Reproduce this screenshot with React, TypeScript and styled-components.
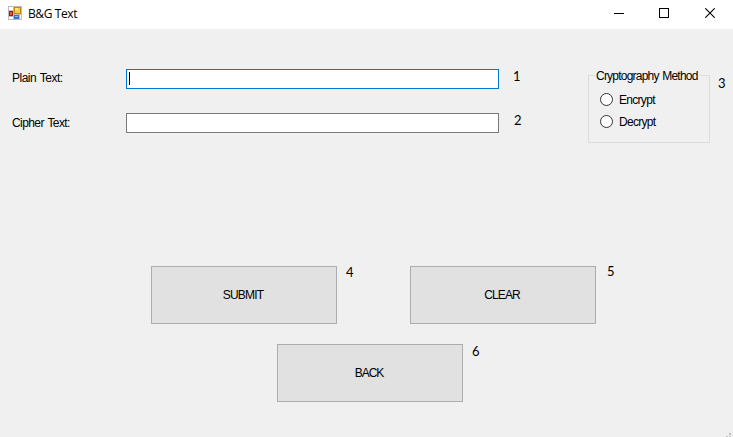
import React from "react";
import styled, { createGlobalStyle } from "styled-components";

const GlobalStyle = createGlobalStyle`
  * { box-sizing: border-box; }
  html, body { margin: 0; padding: 0; overflow: hidden; }
`;

const Window = styled.div`
  position: relative;
  display: flex;
  flex-direction: column;
  width: 733px;
  height: 437px;
  background: #f0f0f0;
  color: #000;
  font: 12px/16px "Liberation Sans", Arial, sans-serif;
`;

const TitleBar = styled.header`
  display: flex;
  align-items: center;
  height: 29px;
  padding-left: 8px;
  background: #fff;
  flex: none;
`;

const AppIcon = styled.svg`
  display: block;
  width: 14px;
  height: 14px;
  margin-top: -3px;
`;

const Title = styled.h1`
  flex: 1;
  margin: -1px 0 0 6px;
  font: 12px/16px "Open Sans", "Noto Sans", sans-serif;
  letter-spacing: -0.4px;
`;

const WindowButton = styled.button`
  display: flex;
  align-items: center;
  justify-content: center;
  width: 46px;
  height: 29px;
  padding: 0 0 3px;
  border: 0;
  background: transparent;
  &:first-of-type { width: 45px; }
`;

const Form = styled.main`
  display: flex;
  flex-direction: column;
  flex: 1;
`;

const TopSection = styled.section`
  display: flex;
  height: 237px;
  padding-top: 40px;
`;

const Fields = styled.div`
  display: flex;
  flex-direction: column;
  gap: 24px;
  width: 588px;
`;

const FieldRow = styled.div`
  display: flex;
  height: 20px;
`;

const FieldLabel = styled.label<{ $top: number; $tracking: number }>`
  width: 126px;
  padding: ${(p) => p.$top}px 0 0 12px;
  letter-spacing: ${(p) => p.$tracking}px;
  word-spacing: 1px;
`;

const Field = styled.div<{ $focused?: boolean }>`
  width: 373px;
  height: 20px;
  padding: 2px;
  border: 1px solid ${(p) => (p.$focused ? "#0078d7" : "#7a7a7a")};
  background: #fff;
`;

const Caret = styled.span`
  display: block;
  width: 1px;
  height: 13px;
  background: #000;
`;

const Marker = styled.span<{ $left: number; $top: number }>`
  margin: ${(p) => p.$top}px 0 0 ${(p) => p.$left}px;
  font: 13px/16px Lato, "Open Sans", sans-serif;
`;

const Group = styled.fieldset`
  width: 122px;
  height: 77px;
  min-width: 0;
  margin: -3px 0 0;
  padding: 5px 0 0 11px;
  border: 1px solid #dcdcdc;
`;

const Legend = styled.legend`
  margin-left: -5px;
  padding: 2px 1px 0;
  white-space: nowrap;
  width: 105px;
  letter-spacing: -0.78px;
  word-spacing: 1px;
`;

const Option = styled.label`
  display: flex;
  align-items: center;
  gap: 6px;
  height: 22px;
  letter-spacing: -0.7px;
`;

const Radio = styled.span`
  width: 13px;
  height: 13px;
  margin-top: -1px;
  border: 1px solid #333;
  border-radius: 50%;
  background: #fff;
`;

const ButtonRow = styled.div<{ $left: number }>`
  display: flex;
  height: 78px;
  padding-left: ${(p) => p.$left}px;
`;

const MarkedButton = styled.div`
  display: flex;
  width: 259px;
`;

const Button = styled.button<{ $tracking: number }>`
  width: 186px;
  height: 58px;
  padding: 0 2px 0 0;
  border: 1px solid #adadad;
  background: #e1e1e1;
  color: #000;
  font: inherit;
  letter-spacing: ${(p) => p.$tracking}px;
`;

const Grip = styled.svg`
  position: absolute;
  right: 0;
  bottom: 0;
  width: 8px;
  height: 4px;
`;

export default function App() {
  return (
    <>
      <GlobalStyle />
      <Window>
        <TitleBar>
          <AppIcon viewBox="0 0 14 14" shapeRendering="crispEdges">
            <path d="M0 0h14v14H0z" fill="#bcbcbc" />
            <path d="M1 1h4v3H1zM1 11h4v2H1zM12 9h1v4h-1z" fill="#fff" />
            <path d="M6 1h7v7H6z" fill="#c58b08" />
            <path d="M7 2h5v5H7z" fill="#f5cd45" />
            <path d="M7 2h3v2H7z" fill="#ffe991" />
            <path d="M1 5h4v5H1z" fill="#9d2018" />
            <path d="M2 6h2v3H2z" fill="#d95b46" />
            <path d="M6 9h5v4H6z" fill="#3b70d0" />
            <path d="M7 10h3v1H7z" fill="#8db7ff" />
          </AppIcon>
          <Title>B&amp;G Text</Title>
          <WindowButton aria-label="Minimize">
            <svg width="10" height="10" shapeRendering="crispEdges"><path d="M0 5h10v1H0z" /></svg>
          </WindowButton>
          <WindowButton aria-label="Maximize">
            <svg width="10" height="10" shapeRendering="crispEdges"><path d="M.5.5h9v9h-9z" fill="none" stroke="#000" /></svg>
          </WindowButton>
          <WindowButton aria-label="Close">
            <svg width="10" height="10"><path d="M.3.3l9.4 9.4M9.7.3L.3 9.7" stroke="#000" strokeWidth="1.1" /></svg>
          </WindowButton>
        </TitleBar>
        <Form>
          <TopSection>
            <Fields>
              <FieldRow>
                <FieldLabel $top={1} $tracking={-0.5}>Plain Text:</FieldLabel>
                <Field $focused><Caret /></Field>
                <Marker $left={14} $top={-1}>1</Marker>
              </FieldRow>
              <FieldRow>
                <FieldLabel $top={2} $tracking={-0.58}>Cipher Text:</FieldLabel>
                <Field />
                <Marker $left={15} $top={-1}>2</Marker>
              </FieldRow>
            </Fields>
            <Group>
              <Legend>Cryptography Method</Legend>
              <Option><Radio />Encrypt</Option>
              <Option><Radio />Decrypt</Option>
            </Group>
            <Marker $left={8} $top={6}>3</Marker>
          </TopSection>
          <ButtonRow $left={151}>
            <MarkedButton>
              <Button $tracking={-0.8}>SUBMIT</Button>
              <Marker $left={9} $top={-2}>4</Marker>
            </MarkedButton>
            <MarkedButton>
              <Button $tracking={-0.9}>CLEAR</Button>
              <Marker $left={11} $top={-3}>5</Marker>
            </MarkedButton>
          </ButtonRow>
          <ButtonRow $left={277}>
            <MarkedButton>
              <Button $tracking={-1}>BACK</Button>
              <Marker $left={9} $top={-1}>6</Marker>
            </MarkedButton>
          </ButtonRow>
        </Form>
        <Grip viewBox="0 0 8 4" shapeRendering="crispEdges">
          <path d="M4 0h2v2H4zM1 3h2v1H1zM4 3h2v1H4z" fill="#bfbfbf" />
        </Grip>
      </Window>
    </>
  );
}
